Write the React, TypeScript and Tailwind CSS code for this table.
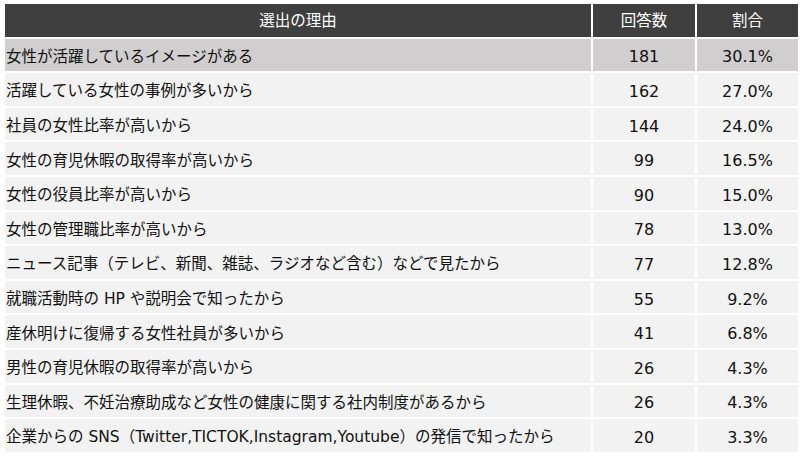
import { Fragment } from "react";

const rows: [string, number, string][] = [
  ["女性が活躍しているイメージがある", 181, "30.1%"],
  ["活躍している女性の事例が多いから", 162, "27.0%"],
  ["社員の女性比率が高いから", 144, "24.0%"],
  ["女性の育児休暇の取得率が高いから", 99, "16.5%"],
  ["女性の役員比率が高いから", 90, "15.0%"],
  ["女性の管理職比率が高いから", 78, "13.0%"],
  ["ニュース記事（テレビ、新聞、雑誌、ラジオなど含む）などで見たから", 77, "12.8%"],
  ["就職活動時の HP や説明会で知ったから", 55, "9.2%"],
  ["産休明けに復帰する女性社員が多いから", 41, "6.8%"],
  ["男性の育児休暇の取得率が高いから", 26, "4.3%"],
  ["生理休暇、不妊治療助成など女性の健康に関する社内制度があるから", 26, "4.3%"],
  ["企業からの SNS（Twitter,TICTOK,Instagram,Youtube）の発信で知ったから", 20, "3.3%"],
];

const App = () => {
  return (
    <div className="w-[800px] h-[457px] bg-white pt-[4px] pl-[5px] font-['DejaVu_Sans','Noto_Sans_CJK_JP',sans-serif] text-[15.5px] text-[#111]">
      <div className="grid grid-cols-[586px_102px_101px] gap-[2px] w-[793px]">
        <div className="h-[32.6px] bg-[#3f3f3f] text-white flex items-center justify-center pt-[3px]">選出の理由</div>
        <div className="h-[32.6px] bg-[#3f3f3f] text-white flex items-center justify-center pt-[3px]">回答数</div>
        <div className="h-[32.6px] bg-[#3f3f3f] text-white flex items-center justify-center pt-[3px]">割合</div>
        {rows.map(([reason, count, ratio], i) => {
          const bg = i === 0 ? "bg-[#d0cece]" : "bg-[#f2f2f2]";
          return (
            <Fragment key={i}>
              <div className={`h-[32.6px] ${bg} flex items-center pl-[1px] pt-[5px] whitespace-nowrap`}>
                {reason}
              </div>
              <div className={`h-[32.6px] ${bg} flex items-center justify-center pt-[5px] text-[16px]`}>
                {count}
              </div>
              <div className={`h-[32.6px] ${bg} flex items-center justify-center pt-[5px] text-[16px]`}>
                {ratio}
              </div>
            </Fragment>
          );
        })}
      </div>
    </div>
  );
};

export default App;
